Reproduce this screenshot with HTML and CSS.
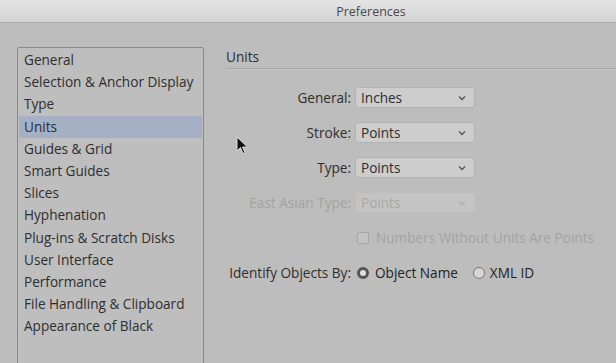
FILE: index.html
```html
<!DOCTYPE html>
<html>
<head>
<meta charset="utf-8">
<link rel="stylesheet" href="styles.css">
</head>
<body>
<div class="titlebar"><span class="title">Preferences</span></div>
<div class="main">
  <ul class="list">
    <li>General</li>
    <li>Selection &amp; Anchor Display</li>
    <li>Type</li>
    <li class="sel">Units</li>
    <li>Guides &amp; Grid</li>
    <li>Smart Guides</li>
    <li>Slices</li>
    <li>Hyphenation</li>
    <li>Plug-ins &amp; Scratch Disks</li>
    <li>User Interface</li>
    <li>Performance</li>
    <li>File Handling &amp; Clipboard</li>
    <li>Appearance of Black</li>
  </ul>
  <div class="pane">
    <div class="header">Units</div>
    <div class="form">
      <div class="label">General:</div>
      <div class="select"><span>Inches</span><svg class="chev" width="8" height="6" viewBox="0 0 8 6"><path d="M1 1.5 L4 4.5 L7 1.5" fill="none" stroke="#555" stroke-width="1.3"/></svg></div>
      <div class="label">Stroke:</div>
      <div class="select"><span>Points</span><svg class="chev" width="8" height="6" viewBox="0 0 8 6"><path d="M1 1.5 L4 4.5 L7 1.5" fill="none" stroke="#555" stroke-width="1.3"/></svg></div>
      <div class="label">Type:</div>
      <div class="select"><span>Points</span><svg class="chev" width="8" height="6" viewBox="0 0 8 6"><path d="M1 1.5 L4 4.5 L7 1.5" fill="none" stroke="#555" stroke-width="1.3"/></svg></div>
      <div class="label dis">East Asian Type:</div>
      <div class="select disabled"><span>Points</span><svg class="chev" width="8" height="6" viewBox="0 0 8 6"><path d="M1 1.5 L4 4.5 L7 1.5" fill="none" stroke="#b0b0b0" stroke-width="1.3"/></svg></div>
      <div class="label"></div>
      <div class="check dis"><span class="box"></span>Numbers Without Units Are Points</div>
      <div class="label">Identify Objects By:</div>
      <div class="radios">
        <span class="radio on"></span><span class="rlabel">Object Name</span>
        <span class="radio"></span><span class="rlabel">XML ID</span>
      </div>
    </div>
  </div>
</div>
<svg class="cursor" width="14" height="20" viewBox="0 0 14 20"><path d="M1 1 L1 15 L4.5 11.5 L7 17.5 L9 16.6 L6.6 11 L11.5 11 Z" fill="#111" stroke="#ddd" stroke-width="1"/></svg>
</body>
</html>
```
FILE: styles.css
```css
html, body {
  margin: 0;
  padding: 0;
}
body {
  width: 616px;
  height: 363px;
  overflow: hidden;
  background: #bdbdbd;
  font-family: "Open Sans", "Noto Sans", sans-serif;
  font-size: 13.6px;
  color: #2e2e2e;
  position: relative;
}
.titlebar {
  height: 23px;
  box-sizing: border-box;
  background: linear-gradient(#e4e4e4, #d3d3d3);
  border-bottom: 1px solid #a9a9a9;
  display: flex;
  align-items: center;
  justify-content: center;
  padding-left: 126px;
}
.title {
  font-size: 12.5px;
  color: #4a4a4a;
}
.main {
  display: flex;
  align-items: flex-start;
}
.list {
  list-style: none;
  margin: 24px 0 0 17px;
  padding: 1px 1px 0 1px;
  width: 183px;
  height: 330px;
  border: 1px solid #6f8dbf;
  border-radius: 2px;
  background: #bebebe;
  flex: none;
}
.list li {
  height: 22.2px;
  line-height: 22px;
  padding-left: 5px;
  white-space: nowrap;
}
.list li.sel {
  background: #a5b0c4;
  color: #2a2f3a;
}
.pane {
  margin-left: 22px;
  flex: 1;
  padding-top: 25px;
}
.header {
  height: 20px;
  line-height: 18px;
  border-bottom: 1px solid #a6a6a6;
  box-shadow: 0 1px 0 #c6c6c6;
}
.form {
  display: grid;
  grid-template-columns: 125px 260px;
  grid-auto-rows: 21px;
  row-gap: 14px;
  column-gap: 4px;
  margin-top: 18px;
  align-items: center;
}
.label {
  text-align: right;
  white-space: nowrap;
}
.dis {
  color: #a3a3a3;
}
.select {
  width: 120px;
  height: 21px;
  box-sizing: border-box;
  border: 1px solid #b1b1b1;
  border-radius: 3px;
  background: #cdcdcd;
  display: flex;
  align-items: center;
  justify-content: space-between;
  padding: 0 8px 0 5px;
}
.select.disabled {
  background: #c4c4c4;
  border-color: #bdbdbd;
  color: #a9a9a9;
}
.check {
  display: flex;
  align-items: center;
  white-space: nowrap;
  margin-left: 2px;
}
.box {
  width: 10px;
  height: 10px;
  border: 1px solid #a6a6a6;
  border-radius: 2px;
  background: #c3c3c3;
  margin-right: 7px;
  flex: none;
}
.radios {
  display: flex;
  align-items: center;
  white-space: nowrap;
  margin-left: 2px;
}
.radio {
  width: 12px;
  height: 12px;
  border-radius: 50%;
  border: 1px solid #7a7a7a;
  background: #d6d6d6;
  margin-right: 5px;
  box-sizing: border-box;
  flex: none;
}
.radio.on {
  border: 3.5px solid #555;
  background: #e0e0e0;
  margin-right: 6px;
}
.rlabel {
  margin-right: 15px;
  color: #222;
}
.cursor {
  position: absolute;
  left: 236px;
  top: 136px;
}
```
